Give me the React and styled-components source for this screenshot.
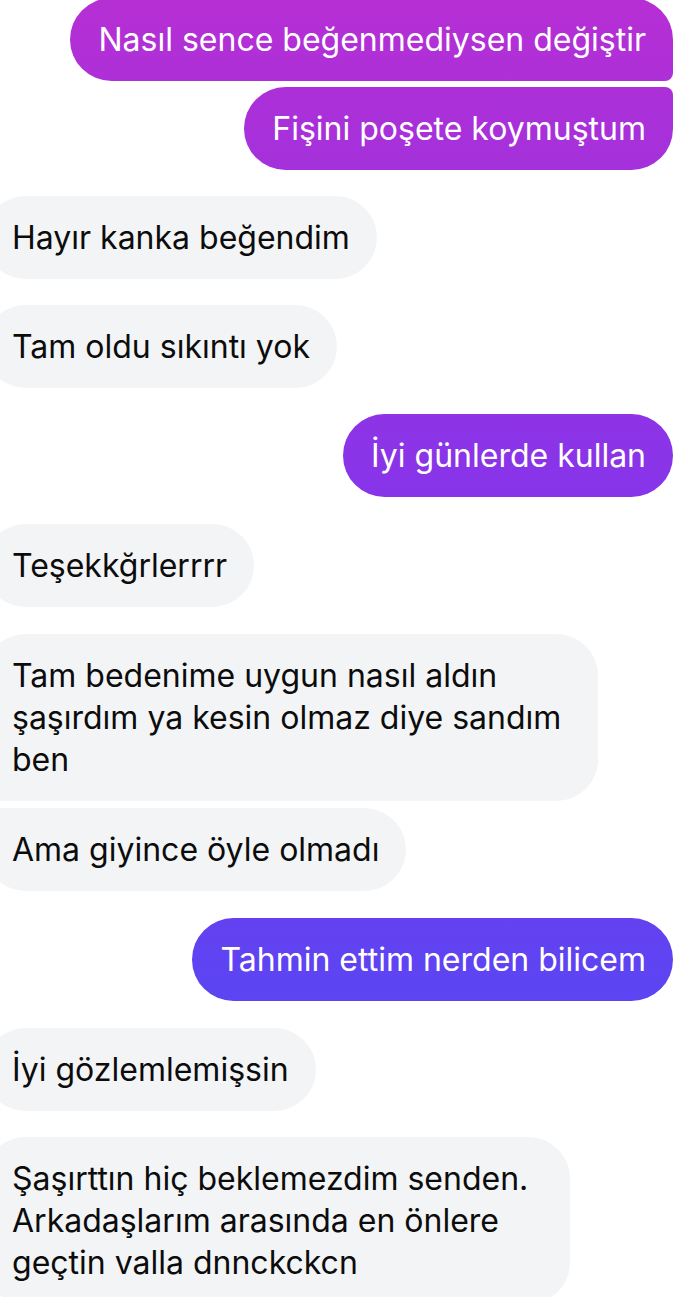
import React from 'react';
import styled, { createGlobalStyle, css } from 'styled-components';

const GlobalStyle = createGlobalStyle`
    html, body {
        margin: 0;
        padding: 0;
        background: #fff;
    }
    body {
        font-family: Inter, "Liberation Sans", "Noto Sans", sans-serif;
        -webkit-font-smoothing: antialiased;
    }
`;

const ChatWrapper = styled.div`
    width: 690px;
    height: 1297px;
    overflow: hidden;
    display: flex;
    flex-direction: column;
    background-color: #fff;
`;

const Row = styled.div`
    display: flex;
    justify-content: ${({ $mine }) => ($mine ? 'flex-end' : 'flex-start')};
    margin-top: ${({ $gap }) => $gap}px;
    padding-right: ${({ $mine }) => ($mine ? '17px' : '0')};
    margin-left: ${({ $mine }) => ($mine ? '0' : '-16px')};
`;

const big = '41.5px';
const small = '8px';

const Bubble = styled.div`
    max-width: 600px;
    padding: 20.5px ${({ $padRight }) => $padRight || 27}px 20.5px 28px;
    font-size: 32px;
    line-height: 42px;
    letter-spacing: 0;
    white-space: pre-line;
    ${({ $mine, $pos }) =>
        $mine
            ? css`
                  color: #fff;
                  background-image: linear-gradient(
                      to bottom,
                      #b62fd4 0px,
                      #a331dc 180px,
                      #8a34e8 460px,
                      #7339ee 760px,
                      #5d44f2 980px,
                      #5548f4 1297px
                  );
                  background-attachment: fixed;
                  border-radius: ${big} ${$pos === 'last' ? small : big}
                      ${$pos === 'first' ? small : big} ${big};
              `
            : css`
                  color: #0c0c0c;
                  background-color: #f3f4f6;
                  border-radius: ${$pos === 'last' ? small : big} ${big} ${big}
                      ${$pos === 'first' ? small : big};
              `}
`;

const messages = [
    { mine: true, pos: 'first', gap: -2, text: 'Nasıl sence beğenmediysen değiştir' },
    { mine: true, pos: 'last', gap: 6, text: 'Fişini poşete koymuştum' },
    { mine: false, gap: 26, text: 'Hayır kanka beğendim' },
    { mine: false, gap: 26, text: 'Tam oldu sıkıntı yok' },
    { mine: true, gap: 26, text: 'İyi günlerde kullan' },
    { mine: false, gap: 27, text: 'Teşekkğrlerrrr' },
    { mine: false, pos: 'first', gap: 27, padRight: 37, text: 'Tam bedenime uygun nasıl aldın\nşaşırdım ya kesin olmaz diye sandım\nben' },
    { mine: false, pos: 'last', gap: 7, text: 'Ama giyince öyle olmadı' },
    { mine: true, gap: 27, text: 'Tahmin ettim nerden bilicem' },
    { mine: false, gap: 27, text: 'İyi gözlemlemişsin' },
    { mine: false, gap: 26, padRight: 42, text: 'Şaşırttın hiç beklemezdim senden.\nArkadaşlarım arasında en önlere\ngeçtin valla dnnckckcn' },
];

export default function App() {
    return (
        <>
            <GlobalStyle />
            <ChatWrapper>
                {messages.map((m, i) => (
                    <Row key={i} $mine={m.mine} $gap={m.gap}>
                        <Bubble $mine={m.mine} $pos={m.pos} $padRight={m.padRight}>
                            {m.text}
                        </Bubble>
                    </Row>
                ))}
            </ChatWrapper>
        </>
    );
}
